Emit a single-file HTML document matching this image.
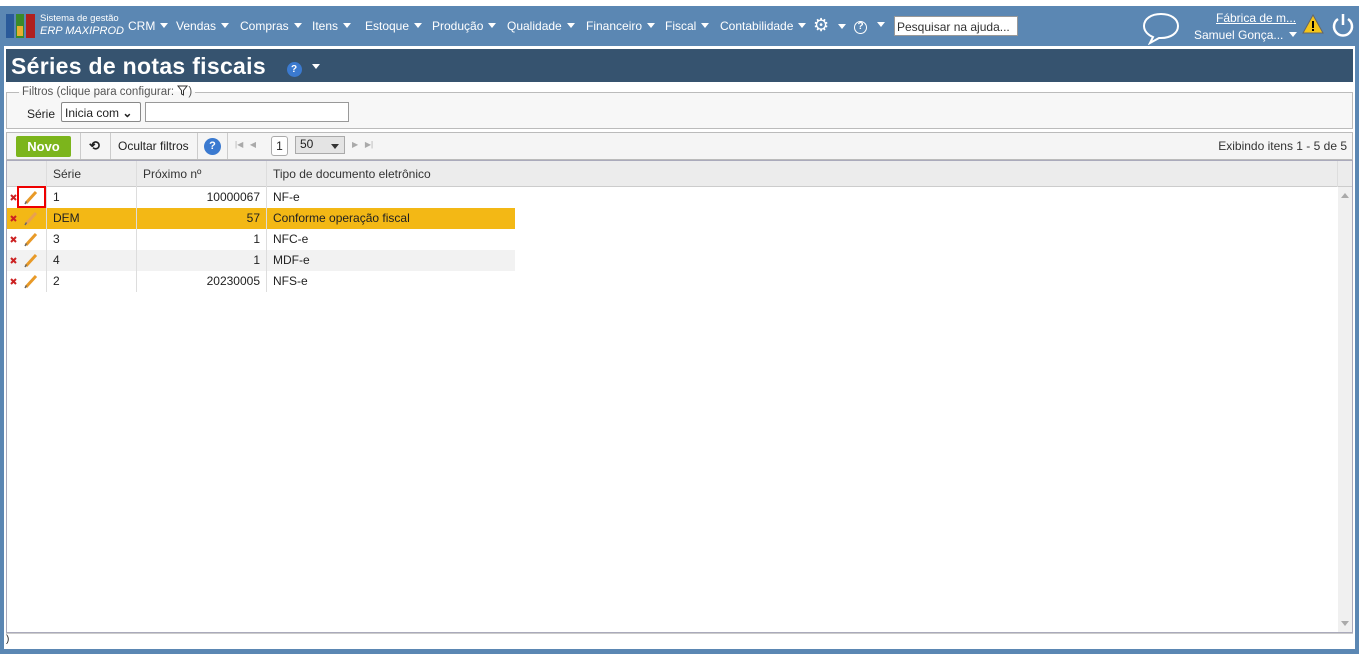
<!DOCTYPE html>
<html><head><meta charset="utf-8"><style>
*{box-sizing:border-box}
body{margin:0;width:1359px;height:654px;overflow:hidden;background:#5b87b3;font-family:"Liberation Sans",sans-serif;font-size:12px;color:#222;position:relative}
.topw{position:absolute;left:0;top:0;width:1359px;height:6px;background:#fff}
.hdr{position:absolute;left:0;top:6px;width:1359px;height:40px;background:#5b87b3;color:#fff}
.menu{position:absolute;top:13px;font-size:12px;white-space:nowrap}
.tri{display:inline-block;width:0;height:0;border-left:4px solid transparent;border-right:4px solid transparent;border-top:5px solid #fff;vertical-align:2px;margin-left:5px}
.page{position:absolute;left:4px;top:46px;width:1351px;height:603px;background:#fff}
.title{position:absolute;left:2px;top:3px;width:1347px;height:33px;background:#36536f;color:#fff;font:bold 23px "Liberation Sans",sans-serif;letter-spacing:0.3px;padding:4px 0 0 5px}
.fs{position:absolute;left:2px;top:46px;width:1347px;height:37px;border:1px solid #bbb;background:#f7f7f7}
.tb{position:absolute;left:2px;top:86px;width:1347px;height:28px;border:1px solid #bbb;background:#f5f5f5}
.grid{position:absolute;left:2px;top:114px;width:1347px;height:473px;border:1px solid #aab;background:#fff}
.gh{position:absolute;left:0;top:0;width:1345px;height:26px;background:#ececec;border-bottom:1px solid #ccc}
.row{position:absolute;left:0;width:508px;height:21px;font-size:12px}
.c{position:absolute;top:0;height:21px;line-height:21px;border-right:1px solid #ddd}
.sb{position:absolute;right:0;top:26px;width:14px;height:445px;background:#f0f0f0}
.btm{position:absolute;left:2px;top:587px;width:1347px;height:15px;border-top:1px solid #ccc;background:#fff;font-size:10px}
.x{position:absolute;left:3px;top:3px}
.p{position:absolute;left:16px;top:2px}
</style></head><body>
<div class="topw"></div>
<div class="hdr">
 <div style="position:absolute;left:6px;top:8px;width:8px;height:24px;background:#2a5a9a"></div>
 <div style="position:absolute;left:16px;top:8px;width:8px;height:24px;background:#3a8a2a"></div>
 <div style="position:absolute;left:17px;top:20px;width:6px;height:10px;background:#e8b030"></div>
 <div style="position:absolute;left:26px;top:8px;width:9px;height:24px;background:#b02020"></div>
 <div style="position:absolute;left:40px;top:7px;font-size:9.5px;line-height:12px">Sistema de gestão<br><i style="font-size:11px">ERP MAXIPROD</i></div>
 <div class="menu" style="left:128px">CRM<span class="tri"></span></div>
 <div class="menu" style="left:176px">Vendas<span class="tri"></span></div>
 <div class="menu" style="left:240px">Compras<span class="tri"></span></div>
 <div class="menu" style="left:312px">Itens<span class="tri"></span></div>
 <div class="menu" style="left:365px">Estoque<span class="tri"></span></div>
 <div class="menu" style="left:432px">Produção<span class="tri"></span></div>
 <div class="menu" style="left:507px">Qualidade<span class="tri"></span></div>
 <div class="menu" style="left:586px">Financeiro<span class="tri"></span></div>
 <div class="menu" style="left:665px">Fiscal<span class="tri"></span></div>
 <div class="menu" style="left:720px">Contabilidade<span class="tri"></span></div>
 <div class="menu" style="left:813px;top:9px;font-size:18px">⚙<span class="tri" style="margin-left:9px"></span></div>
 <div class="menu" style="left:854px;top:12px"><span style="display:inline-block;width:13px;height:13px;border:1.5px solid #fff;border-radius:50%;font-size:10px;line-height:10px;text-align:center;font-weight:bold">?</span><span class="tri" style="margin-left:10px"></span></div>
 <div style="position:absolute;left:894px;top:10px;width:124px;height:20px;background:#fff;color:#333;font-size:12px;padding:3px 2px;border:1px solid #999;white-space:nowrap;overflow:hidden">Pesquisar na ajuda...</div>
 <svg style="position:absolute;left:1142px;top:5px" width="38" height="34" viewBox="0 0 38 34"><path d="M19 3C9 3 2 8 2 15c0 5 4 9 9 11l-3 6 9-5c1 0 2 0 2 0 10 0 17-5 17-12S29 3 19 3z" fill="none" stroke="#fff" stroke-width="2"/></svg>
 <div style="position:absolute;left:1216px;top:5px;font-size:12px;text-decoration:underline">Fábrica de m...</div>
 <div style="position:absolute;left:1194px;top:22px;font-size:12px">Samuel Gonça...<span class="tri" style="margin-left:6px"></span></div>
 <svg style="position:absolute;left:1302px;top:7px" width="22" height="22"><path d="M11 2L21 20H1z" fill="#f5c518" stroke="#666"/><rect x="10" y="8" width="2" height="7" fill="#000"/><rect x="10" y="16" width="2" height="2" fill="#000"/></svg>
 <svg style="position:absolute;left:1331px;top:6px" width="24" height="26"><path d="M7 7A9 9 0 1 0 17 7" fill="none" stroke="#fff" stroke-width="2.5"/><line x1="12" y1="2" x2="12" y2="13" stroke="#fff" stroke-width="2.5"/></svg>
</div>
<div class="page">
 <div class="title">Séries de notas fiscais <span style="display:inline-block;width:15px;height:15px;border-radius:50%;background:#3b7ad0;font-size:10px;line-height:15px;text-align:center;vertical-align:2px;margin-left:14px;letter-spacing:0">?</span><span class="tri" style="vertical-align:5px;margin-left:10px"></span></div>
 <div class="fs">
  <div style="position:absolute;left:12px;top:-8px;padding:0 3px;font-size:11.5px;color:#555;background:linear-gradient(#fff 50%,#f7f7f7 50%)">Filtros (clique para configurar: <svg width="11" height="11" style="vertical-align:-1px"><path d="M1 1H10L6.5 5.5V10L4.5 9V5.5Z" fill="none" stroke="#333"/></svg>)</div>
  <span style="position:absolute;left:20px;top:14px">Série</span>
  <div style="position:absolute;left:54px;top:9px;width:80px;height:20px;border:1px solid #888;border-radius:2px;background:#fff;padding:3px 3px;white-space:nowrap">Inicia com <b>⌄</b></div>
  <div style="position:absolute;left:138px;top:9px;width:204px;height:20px;border:1px solid #999;background:#fff"></div>
 </div>
 <div class="tb">
  <div style="position:absolute;left:9px;top:3px;width:55px;height:21px;background:#7cb51c;color:#fff;font-weight:bold;font-size:13px;text-align:center;line-height:21px;border-radius:2px">Novo</div>
  <div style="position:absolute;left:73px;top:0;height:26px;border-left:1px solid #ccc"></div>
  <div style="position:absolute;left:82px;top:5px;font-size:13px;font-weight:bold">⟲</div>
  <div style="position:absolute;left:103px;top:0;height:26px;border-left:1px solid #ccc"></div>
  <div style="position:absolute;left:111px;top:6px">Ocultar filtros</div>
  <div style="position:absolute;left:190px;top:0;height:26px;border-left:1px solid #ccc"></div>
  <div style="position:absolute;left:197px;top:5px;width:17px;height:17px;border-radius:50%;background:#3b7ad0;color:#fff;font-weight:bold;font-size:11px;text-align:center;line-height:17px">?</div>
  <div style="position:absolute;left:220px;top:0;height:26px;border-left:1px solid #ccc"></div>
  <div style="position:absolute;left:228px;top:7px;color:#aaa;font-size:8px">|◀ &nbsp;&nbsp;◀</div>
  <div style="position:absolute;left:264px;top:3px;width:17px;height:20px;border:1px solid #aaa;border-radius:3px;background:#fff;text-align:center;line-height:18px">1</div>
  <div style="position:absolute;left:288px;top:3px;width:50px;height:18px;border:1px solid #aaa;background:#e4e4e4;padding-left:4px;line-height:15px">50<span style="position:absolute;right:5px;top:7px;border-left:4px solid transparent;border-right:4px solid transparent;border-top:5px solid #333"></span></div>
  <div style="position:absolute;left:345px;top:7px;color:#aaa;font-size:8px">▶ &nbsp;&nbsp;▶|</div>
  <div style="position:absolute;right:5px;top:6px;color:#333">Exibindo itens 1 - 5 de 5</div>
 </div>
 <div class="grid">
  <div class="gh">
   <div class="c" style="left:0;width:40px;height:26px"></div>
   <div class="c" style="left:40px;width:90px;height:26px;line-height:26px;padding-left:6px;color:#333">Série</div>
   <div class="c" style="left:130px;width:130px;height:26px;line-height:26px;padding-left:6px;color:#333">Próximo nº</div>
   <div class="c" style="left:260px;width:1071px;height:26px;line-height:26px;padding-left:6px;color:#333">Tipo de documento eletrônico</div>
  </div>
  <div class="sb"><div style="position:absolute;left:3px;top:6px;border-left:4px solid transparent;border-right:4px solid transparent;border-bottom:5px solid #aaa"></div><div style="position:absolute;left:3px;bottom:6px;border-left:4px solid transparent;border-right:4px solid transparent;border-top:5px solid #aaa"></div></div>

  <div class="row" style="top:26px;background:#fff">
   <div class="c" style="left:0;width:40px"><svg class="x" width="7" height="15"><path d="M1 5L6 10M6 5L1 10" stroke="#c22" stroke-width="2"/></svg><svg class="p" width="16" height="16"><path d="M3 14L13 3" stroke="#e89a28" stroke-width="3"/><path d="M2 15L3.5 12.5" stroke="#666" stroke-width="1.5"/></svg></div>
   <div style="position:absolute;left:10px;top:-1px;width:29px;height:22px;border:2px solid #e00"></div>
   <div class="c" style="left:40px;width:90px;padding-left:6px">1</div><div class="c" style="left:130px;width:130px;text-align:right;padding-right:6px">10000067</div><div class="c" style="left:260px;width:248px;padding-left:6px;border:0">NF-e</div></div>
  <div class="row" style="top:47px;background:#f3b815">
   <div class="c" style="left:0;width:40px"><svg class="x" width="7" height="15"><path d="M1 5L6 10M6 5L1 10" stroke="#c22" stroke-width="2"/></svg><svg class="p" width="16" height="16"><path d="M3 14L13 3" stroke="#e8a050" stroke-width="3"/><path d="M2 15L3.5 12.5" stroke="#666" stroke-width="1.5"/></svg></div>
   <div class="c" style="left:40px;width:90px;padding-left:6px">DEM</div><div class="c" style="left:130px;width:130px;text-align:right;padding-right:6px">57</div><div class="c" style="left:260px;width:248px;padding-left:6px;border:0">Conforme operação fiscal</div></div>
  <div class="row" style="top:68px;background:#fff">
   <div class="c" style="left:0;width:40px"><svg class="x" width="7" height="15"><path d="M1 5L6 10M6 5L1 10" stroke="#c22" stroke-width="2"/></svg><svg class="p" width="16" height="16"><path d="M3 14L13 3" stroke="#e89a28" stroke-width="3"/><path d="M2 15L3.5 12.5" stroke="#666" stroke-width="1.5"/></svg></div>
   <div class="c" style="left:40px;width:90px;padding-left:6px">3</div><div class="c" style="left:130px;width:130px;text-align:right;padding-right:6px">1</div><div class="c" style="left:260px;width:248px;padding-left:6px;border:0">NFC-e</div></div>
  <div class="row" style="top:89px;background:#f2f2f2">
   <div class="c" style="left:0;width:40px"><svg class="x" width="7" height="15"><path d="M1 5L6 10M6 5L1 10" stroke="#c22" stroke-width="2"/></svg><svg class="p" width="16" height="16"><path d="M3 14L13 3" stroke="#e89a28" stroke-width="3"/><path d="M2 15L3.5 12.5" stroke="#666" stroke-width="1.5"/></svg></div>
   <div class="c" style="left:40px;width:90px;padding-left:6px">4</div><div class="c" style="left:130px;width:130px;text-align:right;padding-right:6px">1</div><div class="c" style="left:260px;width:248px;padding-left:6px;border:0">MDF-e</div></div>
  <div class="row" style="top:110px;background:#fff">
   <div class="c" style="left:0;width:40px"><svg class="x" width="7" height="15"><path d="M1 5L6 10M6 5L1 10" stroke="#c22" stroke-width="2"/></svg><svg class="p" width="16" height="16"><path d="M3 14L13 3" stroke="#e89a28" stroke-width="3"/><path d="M2 15L3.5 12.5" stroke="#666" stroke-width="1.5"/></svg></div>
   <div class="c" style="left:40px;width:90px;padding-left:6px">2</div><div class="c" style="left:130px;width:130px;text-align:right;padding-right:6px">20230005</div><div class="c" style="left:260px;width:248px;padding-left:6px;border:0">NFS-e</div></div>
 </div>
 <div class="btm">)</div>
</div>
</body></html>
